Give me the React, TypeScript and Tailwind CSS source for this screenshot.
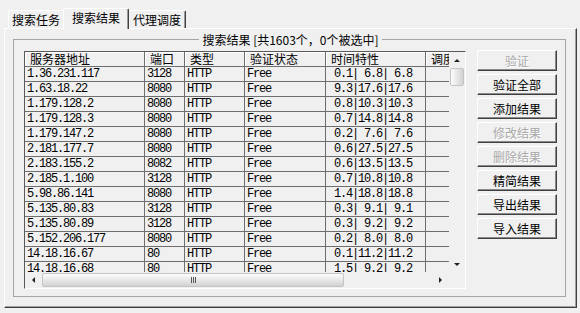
import React from 'react'

// rows visible in the result list
const rows: [string, string, string][] = [
  ['1.36.231.117', '3128', ' 0.1| 6.8| 6.8'],
  ['1.63.18.22', '8080', ' 9.3|17.6|17.6'],
  ['1.179.128.2', '8080', ' 0.8|10.3|10.3'],
  ['1.179.128.3', '8080', ' 0.7|14.8|14.8'],
  ['1.179.147.2', '8080', ' 0.2| 7.6| 7.6'],
  ['2.181.177.7', '8080', ' 0.6|27.5|27.5'],
  ['2.183.155.2', '8082', ' 0.6|13.5|13.5'],
  ['2.185.1.100', '3128', ' 0.7|10.8|10.8'],
  ['5.98.86.141', '8080', ' 1.4|18.8|18.8'],
  ['5.135.80.83', '3128', ' 0.3| 9.1| 9.1'],
  ['5.135.80.89', '3128', ' 0.3| 9.2| 9.2'],
  ['5.152.206.177', '8080', ' 0.2| 8.0| 8.0'],
  ['14.18.16.67', '80', ' 0.1|11.2|11.2'],
  ['14.18.16.68', '80', ' 1.5| 9.2| 9.2'],
]

const headers = ['服务器地址', '端口', '类型', '验证状态', '时间特性', '调度']

const buttons: { label: string; disabled?: boolean }[] = [
  { label: '验证', disabled: true },
  { label: '验证全部' },
  { label: '添加结果' },
  { label: '修改结果', disabled: true },
  { label: '删除结果', disabled: true },
  { label: '精简结果' },
  { label: '导出结果' },
  { label: '导入结果' },
]

function Arrow({ dir }: { dir: 'up' | 'down' | 'left' | 'right' }) {
  const pts = {
    up: '0,3 3,0 6,3',
    down: '0,0 6,0 3,3',
    left: '3,0 3,6 0,3',
    right: '0,0 0,6 3,3',
  }[dir]
  const vert = dir === 'up' || dir === 'down'
  return (
    <svg width={vert ? 6 : 3} height={vert ? 3 : 6} viewBox={vert ? '0 0 6 3' : '0 0 3 6'}>
      <polygon points={pts} fill="#222" />
    </svg>
  )
}

function ClassicButton({ label, disabled }: { label: string; disabled?: boolean }) {
  return (
    <div
      className={`h-[21px] w-[80px] flex items-center justify-center bg-[#f0f0f0]
        border border-t-white border-l-white border-r-[#404040] border-b-[#404040]
        shadow-[inset_-1px_-1px_0_#8a8a8a] text-[12px] leading-[17px]
        ${disabled ? 'text-[#a8a8a8] [text-shadow:1px_1px_0_#ffffff]' : 'text-black'}`}
    >
      {label}
    </div>
  )
}

export default function App() {
  return (
    <div className="w-[580px] h-[313px] overflow-hidden bg-[#f0f0f0] text-black font-['Noto_Sans_CJK_SC',sans-serif] text-[12px]">
      {/* Tab strip */}
      <div className="flex items-end h-[28px] pl-[8px]">
        <div className="h-[18px] w-[55px] text-center leading-[17px] border-t border-l border-t-white border-l-white rounded-tl-[2px]">
          搜索任务
        </div>
        <div className="relative z-10 -mb-px h-[21px] w-[66px] text-center leading-[17px] bg-[#f0f0f0] border-t border-l border-r border-t-white border-l-white border-r-[#404040] shadow-[inset_-1px_0_0_#9a9a9a] rounded-t-[2px]">
          搜索结果
        </div>
        <div className="h-[18px] w-[57px] text-center leading-[17px] border-t border-r border-t-white border-r-[#404040] shadow-[inset_-1px_0_0_#9a9a9a] rounded-tr-[2px]">
          代理调度
        </div>
      </div>

      {/* Tab panel */}
      <div className="ml-[4px] w-[573px] h-[280px] border border-t-white border-l-white border-r-[#404040] border-b-[#404040] shadow-[inset_-1px_-1px_0_#a0a0a0] pt-[2px] pl-[8px]">
        <fieldset className="w-[553px] h-[266px] border border-[#a6a6a6] pl-[10px] pr-[8px] pt-[3px]">
          <legend className="mx-auto px-[3px] leading-[17px] text-[12px]">搜索结果 [共1603个，0个被选中]</legend>

          <div className="flex gap-[11px]">
            {/* List view */}
            <div className="flex w-[442px] h-[238px] border border-t-[#5a5a5a] border-l-[#5a5a5a] border-r-white border-b-white">
              <div className="flex flex-col w-[424px]">
                <div className="h-[220px] overflow-hidden">
                  <div className="grid grid-cols-[120px_40px_60px_81px_100px_60px] w-[461px]">
                    {headers.map((h) => (
                      <div
                        key={h}
                        className="h-[15px] pl-[5px] leading-[14px] whitespace-nowrap border-r border-b border-[#6e6e6e] shadow-[inset_1px_1px_0_#ffffff]"
                      >
                        {h}
                      </div>
                    ))}
                    {rows.map(([ip, port, time]) => (
                      <React.Fragment key={ip}>
                        {[ip, port, 'HTTP', 'Free', time, ''].map((v, i) => (
                          <div
                            key={i}
                            className="h-[15px] pl-[2px] leading-[14px] whitespace-pre border-r border-b border-[#6e6e6e] font-['Liberation_Mono',monospace] text-[12px] tracking-[-1.2px]"
                          >
                            {v}
                          </div>
                        ))}
                      </React.Fragment>
                    ))}
                  </div>
                </div>
                {/* Horizontal scrollbar */}
                <div className="flex items-center h-[16px]">
                  <div className="w-[17px] h-[16px] flex items-center justify-center">
                    <Arrow dir="left" />
                  </div>
                  <div className="w-[302px] h-[14px] rounded-[2px] border border-[#c4c4c4] bg-gradient-to-b from-[#fdfdfd] to-[#d2d2d2] flex items-center justify-center gap-[1px]">
                    <div className="w-px h-[6px] bg-[#555]" />
                    <div className="w-px h-[6px] bg-[#555]" />
                    <div className="w-px h-[6px] bg-[#555]" />
                  </div>
                  <div className="flex-1" />
                  <div className="w-[17px] h-[16px] flex items-center justify-center">
                    <Arrow dir="right" />
                  </div>
                </div>
              </div>
              {/* Vertical scrollbar */}
              <div className="flex flex-col w-[16px]">
                <div className="h-[16px] flex items-center justify-center">
                  <Arrow dir="up" />
                </div>
                <div className="h-[18px] mx-[1px] rounded-[2px] border border-[#c4c4c4] bg-gradient-to-r from-[#fdfdfd] to-[#d2d2d2]" />
                <div className="flex-1" />
                <div className="h-[16px] flex items-center justify-center">
                  <Arrow dir="down" />
                </div>
                <div className="h-[16px]" />
              </div>
            </div>

            {/* Buttons */}
            <div className="-mt-px flex flex-col gap-[3px]">
              {buttons.map((b) => (
                <ClassicButton key={b.label} label={b.label} disabled={b.disabled} />
              ))}
            </div>
          </div>
        </fieldset>
      </div>
    </div>
  )
}
